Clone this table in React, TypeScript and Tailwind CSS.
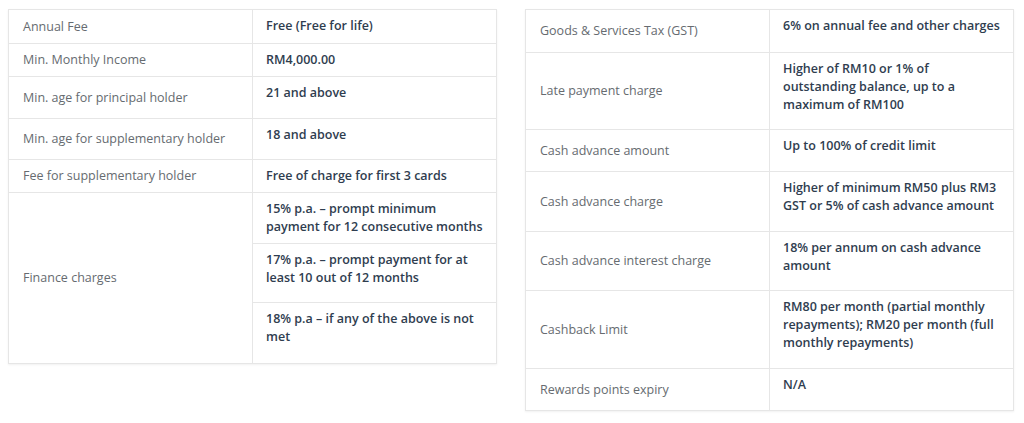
import React from "react";

type Row = { label: string; values: { text: string; h: number }[] };

// Ficha de tarifas - coluna esquerda
const LEFT: Row[] = [
  { label: "Annual Fee", values: [{ text: "Free (Free for life)", h: 34 }] },
  { label: "Min. Monthly Income", values: [{ text: "RM4,000.00", h: 33 }] },
  { label: "Min. age for principal holder", values: [{ text: "21 and above", h: 42 }] },
  { label: "Min. age for supplementary holder", values: [{ text: "18 and above", h: 41 }] },
  { label: "Fee for supplementary holder", values: [{ text: "Free of charge for first 3 cards", h: 33 }] },
  {
    label: "Finance charges",
    values: [
      { text: "15% p.a. – prompt minimum payment for 12 consecutive months", h: 51 },
      { text: "17% p.a. – prompt payment for at least 10 out of 12 months", h: 59 },
      { text: "18% p.a – if any of the above is not met", h: 61 },
    ],
  },
];

// coluna direita
const RIGHT: Row[] = [
  { label: "Goods & Services Tax (GST)", values: [{ text: "6% on annual fee and other charges", h: 43 }] },
  { label: "Late payment charge", values: [{ text: "Higher of RM10 or 1% of outstanding balance, up to a maximum of RM100", h: 77 }] },
  { label: "Cash advance amount", values: [{ text: "Up to 100% of credit limit", h: 42 }] },
  { label: "Cash advance charge", values: [{ text: "Higher of minimum RM50 plus RM3 GST or 5% of cash advance amount", h: 60 }] },
  { label: "Cash advance interest charge", values: [{ text: "18% per annum on cash advance amount", h: 59 }] },
  { label: "Cashback Limit", values: [{ text: "RM80 per month (partial monthly repayments); RM20 per month (full monthly repayments)", h: 78 }] },
  { label: "Rewards points expiry", values: [{ text: "N/A", h: 42 }] },
];

function FeeTable({ rows }: { rows: Row[] }) {
  return (
    <table className="w-[489px] table-fixed border-collapse border border-[#e6e6e6] shadow-[0_1px_2px_rgba(0,0,0,0.06)]">
      <colgroup>
        <col className="w-[244px]" />
        <col />
      </colgroup>
      <tbody>
        {rows.map((row) =>
          row.values.map((v, i) => (
            <tr key={row.label + i} style={{ height: v.h }}>
              {i === 0 && (
                <td
                  rowSpan={row.values.length}
                  className="border border-[#e6e6e6] px-[14px] align-middle text-[12.5px] leading-[18px] text-[#666b70]"
                >
                  {row.label}
                </td>
              )}
              <td className="border border-[#e6e6e6] pl-[13px] pr-[10px] pt-[7px] align-top text-[12.5px] font-semibold leading-[18px] text-[#2f3d4f]">
                {v.text}
              </td>
            </tr>
          ))
        )}
      </tbody>
    </table>
  );
}

export default function App() {
  return (
    <div className="w-[1024px] h-[423px] bg-white font-['Open_Sans',sans-serif]">
      <div className="flex items-start gap-[28px] pl-[8px] pt-[9px]">
        <FeeTable rows={LEFT} />
        <FeeTable rows={RIGHT} />
      </div>
    </div>
  );
}
